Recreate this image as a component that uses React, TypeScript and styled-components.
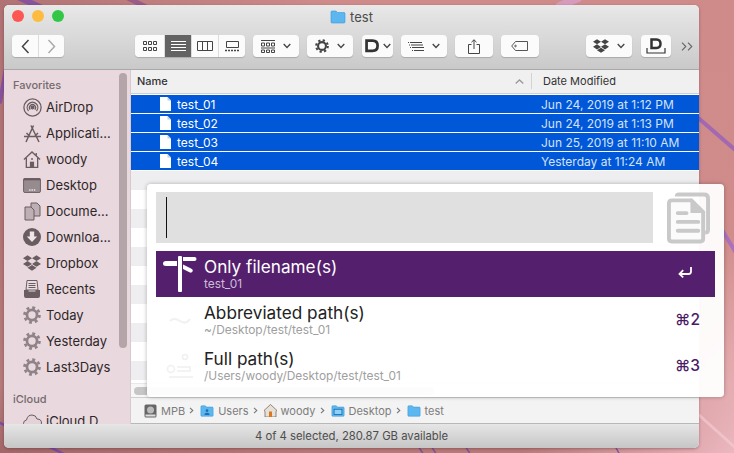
import type { ReactNode } from 'react'
import styled, { createGlobalStyle } from 'styled-components'
import { FaDropbox } from 'react-icons/fa'

const GlobalStyle = createGlobalStyle`
  html, body {
    margin: 0;
    padding: 0;
    width: 734px;
    height: 453px;
    overflow: hidden;
    font-family: 'Inter', 'Liberation Sans', sans-serif;
  }
`

const SELECTED = [
  ['test_01', 'Jun 24, 2019 at 1:12 PM'],
  ['test_02', 'Jun 24, 2019 at 1:13 PM'],
  ['test_03', 'Jun 25, 2019 at 11:10 AM'],
  ['test_04', 'Yesterday at 11:24 AM'],
]

function Gear({ size = 18, color = '#8f8387' }: { size?: number; color?: string }) {
  return (
    <svg width={size} height={size} viewBox="0 0 20 20" fill="none">
      <circle cx="10" cy="10" r="5.6" stroke={color} strokeWidth="3" />
      <circle cx="10" cy="10" r="8.3" stroke={color} strokeWidth="3" strokeDasharray="3.2 3.32" />
    </svg>
  )
}

function Folder({ size = 14, glyph }: { size?: number; glyph?: 'user' | 'desktop' }) {
  return (
    <svg width={size} height={size} viewBox="0 0 16 14">
      <path d="M1 3V2q0-1 1-1h4l1.500 1.500H14q1 0 1 1V12q0 1-1 1H2q-1 0-1-1z" fill="#5cb6ef" stroke="#3a97d8" strokeWidth=".6" />
      {glyph === 'user' && (
        <path d="M8 5a1.600 1.600 0 1 1 0 3.200A1.600 1.600 0 0 1 8 5zM5 11.500q0-2.500 3-2.500t3 2.500z" fill="#1f6fb0" />
      )}
      {glyph === 'desktop' && (
        <rect x="3.500" y="5" width="9" height="6" fill="#8fd0f5" stroke="#1f6fb0" />
      )}
    </svg>
  )
}

const ink = '#6a5d61'

const SIDE_ICONS: Record<string, ReactNode> = {
  AirDrop: (
    <svg width="19" height="19" viewBox="0 0 19 19" fill="none" stroke={ink} strokeWidth="1.300">
      <circle cx="9.500" cy="9.500" r="8.600" />
      <path d="M5.500 13a5.300 5.300 0 1 1 8 0M7.200 11.600a3 3 0 1 1 4.600 0" />
      <circle cx="9.500" cy="9.500" r="1.300" fill={ink} />
    </svg>
  ),
  Apps: (
    <svg width="19" height="19" viewBox="0 0 19 19" fill="none" stroke={ink} strokeWidth="1.500">
      <path d="M3 18 10.500 1.500M8 1.500 16 18M1 12.500h17M3.500 9l3 3M12 12l3-3" />
    </svg>
  ),
  Home: (
    <svg width="18" height="17" viewBox="0 0 19 18" fill="none" stroke={ink} strokeWidth="1.400">
      <path d="M1 9 9.500 1 18 9M3.500 7.500v10h12v-10M14 2v3" />
      <rect x="8" y="12" width="3" height="5.500" fill={ink} />
      <circle cx="9.500" cy="8.500" r="1" fill={ink} stroke="none" />
    </svg>
  ),
  Desktop: (
    <svg width="18" height="15" viewBox="0 0 19 16">
      <rect x=".5" y=".5" width="18" height="15" rx="1.500" fill="#988b8f" stroke={ink} />
      <rect x=".5" y=".5" width="18" height="2" fill={ink} />
      <path d="M6.500 12h1.500v1.500H6.500zM9 12h1.500v1.500H9zM11.500 12H13v1.500h-1.500z" fill="#efe5e8" />
    </svg>
  ),
  Docs: (
    <svg width="17" height="19" viewBox="0 0 17 19" fill="#bdafb3" stroke={ink} strokeWidth="1">
      <path d="M7 1h6l3 3v10H7z" />
      <path d="M1 5h6l3 3v10H1z" />
    </svg>
  ),
  Downloads: (
    <svg width="18" height="18" viewBox="0 0 18 18">
      <circle cx="9" cy="9" r="9" fill={ink} />
      <path d="M6.800 3.500h4.400v5h3L9 14 3.800 8.500h3z" fill="#efe5e8" />
    </svg>
  ),
  Dropbox: <FaDropbox size={18} color={ink} />,
  Recents: (
    <svg width="16" height="18" viewBox="0 0 16 18">
      <path d="M3 .5h10L14 10H2z" fill="#e9dde0" stroke={ink} />
      <path d="M4.500 3.500h7M4.500 5.500h7M4.500 7.500h7" stroke={ink} />
      <path d="M0 10h4.500v1.500h7V10H16v6q0 2-2 2H2q-2 0-2-2z" fill={ink} />
    </svg>
  ),
  Gear: <Gear />,
  Cloud: (
    <svg width="19" height="14" viewBox="0 0 19 14" fill="#e3d3d8" stroke={ink}>
      <path d="M4.500 13q-4 0-4-3.500 0-3 3-3.500 1-5 5.500-5 4 0 5 4 4.500 0 4.500 4 0 4-4 4z" />
    </svg>
  ),
}

const FAVORITES = [
  ['AirDrop', 'AirDrop'],
  ['Apps', 'Applicati...'],
  ['Home', 'woody'],
  ['Desktop', 'Desktop'],
  ['Docs', 'Docume...'],
  ['Downloads', 'Downloa...'],
  ['Dropbox', 'Dropbox'],
  ['Recents', 'Recents'],
  ['Gear', 'Today'],
  ['Gear', 'Yesterday'],
  ['Gear', 'Last3Days'],
]

const DLogo = ({ size = 16 }: { size?: number }) => (
  <svg width={size} height={size * 0.8} viewBox="0 0 20 16" fill="none" stroke="#333" strokeWidth="3.200">
    <path d="M3 2v12h7q6 0 6-6t-6-6z" />
  </svg>
)

const Chevron = () => (
  <svg width="8" height="6" viewBox="0 0 8 6" fill="none" stroke="#444" strokeWidth="1.300">
    <path d="M.7 1 4 4.500 7.300 1" />
  </svg>
)

const Crumb = () => (
  <CrumbMark>
    <svg width="5" height="7" viewBox="0 0 5 7" fill="none" stroke="#777" strokeWidth="1.100">
      <path d="M1 .8 3.800 3.500 1 6.200" />
    </svg>
  </CrumbMark>
)

const grid6 = (
  <svg width="14" height="10" viewBox="0 0 14 10" fill="none" stroke="#444">
    <path d="M.5.500h3v3h-3zM5.500.500h3v3h-3zM10.500.500h3v3h-3zM.5 6.500h3v3h-3zM5.500 6.500h3v3h-3zM10.500 6.500h3v3h-3z" />
  </svg>
)

export default function App() {
  return (
    <Desktop>
      <GlobalStyle />
      <Wallpaper width="734" height="453" viewBox="0 0 734 453" fill="none" strokeLinecap="round">
        <path d="M20-2 40 7" stroke="#7d4aa8" strokeWidth="6" opacity=".8" />
        <path d="M128-2l18 9" stroke="#8a4d8c" strokeWidth="5" opacity=".7" />
        <path d="M560 6l18-8" stroke="#d9a3d2" strokeWidth="8" opacity=".7" />
        <path d="M0 102 6 68" stroke="#7d4aa8" strokeWidth="4" opacity=".8" />
        <path d="M696 116l44 38" stroke="#9a62b8" strokeWidth="4" opacity=".85" />
        <path d="M722 230l16 26" stroke="#a56cc6" strokeWidth="4" opacity=".85" />
        <path d="M-2 422l66 32" stroke="#6f45b5" strokeWidth="2.500" opacity=".85" />
        <path d="M418 446l6 9M431 446l6 9M465 446l6 9M615 446l5 9" stroke="#6a4aa8" strokeWidth="1.500" opacity=".8" />
        <path d="M699 415l40 36" stroke="#f3c9d0" strokeWidth="3" opacity=".7" />
      </Wallpaper>
      <Window>
        <Toolbar>
          <TitleRow>
            <Lights>
              <Light $color="#fc5753" />
              <Light $color="#fdbc40" />
              <Light $color="#33c748" />
            </Lights>
            <Title>
              <Folder size={16} />
              test
            </Title>
          </TitleRow>
          <Tools>
            <Segment>
              <SegButton $w={26}>
                <svg width="9" height="15" viewBox="0 0 9 15" fill="none" stroke="#444" strokeWidth="1.500">
                  <path d="M7.500 1 1.500 7.500 7.500 14" />
                </svg>
              </SegButton>
              <SegButton $w={25}>
                <svg width="9" height="15" viewBox="0 0 9 15" fill="none" stroke="#aaa" strokeWidth="1.500">
                  <path d="M1.500 1 7.500 7.500 1.500 14" />
                </svg>
              </SegButton>
            </Segment>
            <Segment $ml={71}>
              <SegButton $w={29}>{grid6}</SegButton>
              <SegButton $w={26} $active>
                <svg width="15" height="10" viewBox="0 0 15 10" stroke="#fff">
                  <path d="M0 .5h15M0 3.500h15M0 6.500h15M0 9.500h15" />
                </svg>
              </SegButton>
              <SegButton $w={26}>
                <svg width="16" height="10" viewBox="0 0 16 10" fill="none" stroke="#444">
                  <path d="M.5.500h15v9H.5zM5.500.500v9M10.500.500v9" />
                </svg>
              </SegButton>
              <SegButton $w={26}>
                <svg width="15" height="11" viewBox="0 0 15 11" fill="none" stroke="#444">
                  <path d="M1.500.500h12v6h-12z" />
                  <path d="M0 9.500h15" strokeDasharray="2 1" strokeWidth="1.500" />
                </svg>
              </SegButton>
            </Segment>
            <ToolButton $w={46} $ml={8}>
              <svg width="14" height="13" viewBox="0 0 14 13" fill="none" stroke="#444">
                <path d="M0 .5h14M.5 3h3v3h-3zM5.500 3h3v3h-3zM10.500 3h3v3h-3zM0 8h14M.5 10h3v2.500h-3zM5.500 10h3v2.500h-3zM10.500 10h3v2.500h-3z" />
              </svg>
              <Chevron />
            </ToolButton>
            <ToolButton $w={46} $ml={8}>
              <Gear size={14} color="#444" />
              <Chevron />
            </ToolButton>
            <ToolButton $w={31} $ml={9}>
              <DLogo size={17} />
              <Chevron />
            </ToolButton>
            <ToolButton $w={46} $ml={8}>
              <svg width="16" height="9" viewBox="0 0 16 9" stroke="#444">
                <path d="M0 .5h1M2 .5h12M1 3h1M3 3h12M2 5.500h1M4 5.500h12M4 8.500h1M6 8.500h10" />
              </svg>
              <Chevron />
            </ToolButton>
            <ToolButton $w={38} $ml={8}>
              <svg width="12" height="15" viewBox="0 0 12 15" fill="none" stroke="#444">
                <path d="M6 10V.8M3.500 3.200 6 .8l2.500 2.400M3.500 5.500H.5v9h11v-9h-3" />
              </svg>
            </ToolButton>
            <ToolButton $w={38} $ml={8}>
              <svg width="18" height="10" viewBox="0 0 18 10" fill="none" stroke="#555">
                <path d="M.7 5 4.500.5h12v9h-12z" />
                <circle cx="4.500" cy="5" r=".8" />
              </svg>
            </ToolButton>
            <ToolButton $w={46} $ml={47}>
              <FaDropbox size={16} color="#444" />
              <Chevron />
            </ToolButton>
            <ToolButton $w={30} $ml={9}>
              <svg width="20" height="16" viewBox="0 0 20 16" fill="none" stroke="#333">
                <path d="M5.500 1.500V10h5q4 0 4-4.200t-4-4.300z" strokeWidth="2.500" />
                <path d="M1 10v5h18v-5" strokeWidth="1.200" />
              </svg>
            </ToolButton>
            <More>
              <svg width="12" height="9" viewBox="0 0 12 9" fill="none" stroke="#666" strokeWidth="1.100">
                <path d="M1 .7 4.800 4.500 1 8.300M7 .7l3.800 3.800L7 8.300" />
              </svg>
            </More>
          </Tools>
        </Toolbar>
        <Body>
          <Sidebar>
            <SideHeading>Favorites</SideHeading>
            {FAVORITES.map(([icon, label]) => (
              <SideItem key={label}>
                <SideIcon>{SIDE_ICONS[icon]}</SideIcon>
                {label}
              </SideItem>
            ))}
            <SideHeading $mt={13}>iCloud</SideHeading>
            <SideItem>
              <SideIcon>{SIDE_ICONS.Cloud}</SideIcon>
              iCloud D
            </SideItem>
            <SideScroll />
          </Sidebar>
          <Main>
            <ListHeader>
              <NameColumn>
                Name
                <svg width="9" height="5" viewBox="0 0 9 5" fill="none" stroke="#999" strokeWidth="1.300">
                  <path d="M.7 4.500 4.500 1l3.800 3.500" />
                </svg>
              </NameColumn>
              <DateColumn>Date Modified</DateColumn>
            </ListHeader>
            <Rows>
              {SELECTED.map(([name, date]) => (
                <FileRow key={name}>
                  <FileName>
                    <svg width="11" height="14" viewBox="0 0 11 14">
                      <path d="M0 0h7.500L11 3.500V14H0z" fill="#fff" />
                      <path d="M7.500 0 11 3.500H7.500z" fill="#c5cfe0" />
                    </svg>
                    {name}
                  </FileName>
                  <FileDate>{date}</FileDate>
                </FileRow>
              ))}
              {Array.from({ length: 12 }, (_, i) => (
                <Stripe key={i} $odd={i % 2 === 0} />
              ))}
            </Rows>
            <HScroll>
              <HThumb />
            </HScroll>
            <PathBar>
              <svg width="13" height="14" viewBox="0 0 13 14">
                <rect x=".5" y=".5" width="12" height="13" rx="1.500" fill="#666" />
                <circle cx="6.500" cy="6" r="3.500" fill="#bbb" />
                <rect x="1.500" y="10.500" width="10" height="2" fill="#ddd" />
              </svg>
              <PathLabel>MPB</PathLabel>
              <Crumb />
              <Folder glyph="user" />
              <PathLabel>Users</PathLabel>
              <Crumb />
              <svg width="13" height="13" viewBox="0 0 13 13">
                <path d="M0 6.500 6.500.5l6.500 6-1 .8V13H1V7.300z" fill="#e5e0d8" stroke="#6b5b4d" strokeWidth=".7" />
                <rect x="5" y="7.500" width="3" height="5.500" fill="#e0761c" />
              </svg>
              <PathLabel>woody</PathLabel>
              <Crumb />
              <Folder glyph="desktop" />
              <PathLabel>Desktop</PathLabel>
              <Crumb />
              <Folder />
              <PathLabel>test</PathLabel>
            </PathBar>
          </Main>
        </Body>
        <StatusBar>4 of 4 selected, 280.87 GB available</StatusBar>
      </Window>
      <Palette>
        <SearchRow>
          <SearchField>
            <Caret />
          </SearchField>
          <svg width="43" height="52" viewBox="0 0 44 52" fill="none" stroke="#c9c9c9" strokeWidth="4">
            <path d="M10 4q0-2 2-2h26q4 0 4 4v32q0 3-3 3" />
            <path d="M2 11q0-3 3-3h20l12 12v27q0 3-3 3H5q-3 0-3-3z" fill="#fbfbfb" />
            <path d="M25 8l12 12H25z" fill="#c9c9c9" strokeWidth="2" />
            <path d="M11 21h9M11 30h21M11 39h21" strokeWidth="4" strokeLinecap="round" />
          </svg>
        </SearchRow>
        <Option $selected>
          <OptionIcon>
            <svg width="34" height="36" viewBox="0 0 34 36" fill="#fff">
              <rect x="15" y="0" width="4" height="36" rx="1" />
              <path d="M20 1h11.500q2 0 2 2t-2 2H20zM14 5H3q-3 0-3 2.500T3 10h11zM20 8.500l8 4q2.500 1.200 1.500 3t-3 .8L20 13z" />
            </svg>
          </OptionIcon>
          <OptionText>
            <OptionTitle>Only filename(s)</OptionTitle>
            <OptionSub $selected>test_01</OptionSub>
          </OptionText>
          <Shortcut $selected>
            <svg width="14" height="11" viewBox="0 0 14 11" fill="none" stroke="#fff" strokeWidth="1.800">
              <path d="M13 0v4.500Q13 7 10.500 7H2M5.200 3.200 1.500 7l3.700 3.300" />
            </svg>
          </Shortcut>
        </Option>
        <Option>
          <OptionIcon>
            <svg width="22" height="8" viewBox="0 0 22 8" fill="none" stroke="#f1f1f1" strokeWidth="2">
              <path d="M1 5q4-4 10 0t10-2" />
            </svg>
          </OptionIcon>
          <OptionText>
            <OptionTitle>Abbreviated path(s)</OptionTitle>
            <OptionSub>~/Desktop/test/test_01</OptionSub>
          </OptionText>
          <Shortcut>⌘2</Shortcut>
        </Option>
        <Option>
          <OptionIcon>
            <svg width="28" height="26" viewBox="0 0 28 26" fill="none" stroke="#f0f0f0" strokeWidth="1.500">
              <circle cx="19" cy="4" r="2.500" />
              <circle cx="5" cy="16" r="3.500" />
              <path d="M11 14h13v4H11M3 24h24" />
            </svg>
          </OptionIcon>
          <OptionText>
            <OptionTitle>Full path(s)</OptionTitle>
            <OptionSub>/Users/woody/Desktop/test/test_01</OptionSub>
          </OptionText>
          <Shortcut>⌘3</Shortcut>
        </Option>
      </Palette>
    </Desktop>
  )
}

const Desktop = styled.div`
  position: relative;
  box-sizing: border-box;
  width: 734px;
  height: 453px;
  overflow: hidden;
  padding: 5px 35px 5px 4px;
  background:
    linear-gradient(135deg, transparent 82%, #ecb8c0 100%),
    linear-gradient(90deg, rgba(120, 70, 75, 0.35) 0%, transparent 45%),
    linear-gradient(180deg, #cf8a8a 0%, #d08c8b 50%, #d79795 85%, #b87a78 100%);
`

const Wallpaper = styled.svg`
  position: absolute;
  top: 0;
  left: 0;
`

const Window = styled.div`
  position: relative;
  display: flex;
  flex-direction: column;
  height: 100%;
  border-radius: 5px;
  overflow: hidden;
  background: #fff;
  box-shadow: 0 1px 3px rgba(60, 20, 30, 0.35);
`

const Toolbar = styled.div`
  flex: none;
  box-sizing: border-box;
  height: 65px;
  border-bottom: 1px solid #a9a9a9;
  background: linear-gradient(180deg, #e8e8e8 0%, #d9d9d9 50%, #c9c9c9 100%);
`

const TitleRow = styled.div`
  position: relative;
  display: flex;
  align-items: center;
  justify-content: center;
  height: 30px;
`

const Lights = styled.div`
  position: absolute;
  left: 8px;
  top: 5px;
  display: flex;
  gap: 8px;
`

const Light = styled.span<{ $color: string }>`
  width: 12px;
  height: 12px;
  border-radius: 50%;
  background: ${(p) => p.$color};
`

const Title = styled.div`
  display: flex;
  align-items: center;
  gap: 4px;
  margin-top: -6px;
  font-size: 13px;
  color: #4c4c4c;
`

const Tools = styled.div`
  display: flex;
  align-items: flex-start;
  padding-left: 8px;
`

const Segment = styled.div<{ $ml?: number }>`
  display: flex;
  margin-left: ${(p) => p.$ml ?? 0}px;
  height: 22px;
  border-radius: 4px;
  overflow: hidden;
  gap: 1px;
  background: #dcdcdc;
  box-shadow: 0 1px 1px rgba(0, 0, 0, 0.18);
`

const SegButton = styled.div<{ $w: number; $active?: boolean }>`
  display: flex;
  align-items: center;
  justify-content: center;
  width: ${(p) => p.$w}px;
  background: ${(p) => (p.$active ? '#636363' : '#fbfbfb')};
`

const ToolButton = styled.div<{ $w: number; $ml: number }>`
  display: flex;
  align-items: center;
  justify-content: space-evenly;
  box-sizing: border-box;
  width: ${(p) => p.$w}px;
  height: 22px;
  margin-left: ${(p) => p.$ml}px;
  border-radius: 4px;
  background: #fbfbfb;
  box-shadow: 0 1px 1px rgba(0, 0, 0, 0.18);
`

const More = styled.div`
  display: flex;
  align-items: center;
  height: 22px;
  margin-left: 10px;
`

const Body = styled.div`
  display: flex;
  flex: none;
  height: 354px;
`

const Sidebar = styled.div`
  position: relative;
  flex: none;
  width: 127px;
  height: 354px;
  overflow: hidden;
  box-sizing: border-box;
  padding-top: 9px;
  background: #e9d8dd;
  border-right: 1px solid #d9c9cd;
`

const SideHeading = styled.div<{ $mt?: number }>`
  height: 13px;
  margin: ${(p) => p.$mt ?? 0}px 0 2px 9px;
  font-size: 11px;
  line-height: 13px;
  font-weight: 500;
  color: #75696d;
`

const SideItem = styled.div`
  display: flex;
  align-items: center;
  height: 26px;
  font-size: 13px;
  color: #2e2729;
  white-space: nowrap;
`

const SideIcon = styled.span`
  display: flex;
  align-items: center;
  justify-content: center;
  width: 20px;
  margin: 0 4px 0 18px;
`

const SideScroll = styled.div`
  position: absolute;
  top: 3px;
  left: 115px;
  width: 8px;
  height: 275px;
  border-radius: 4px;
  background: #b3a5a8;
`

const Main = styled.div`
  display: flex;
  flex: 1;
  flex-direction: column;
  min-width: 0;
`

const ListHeader = styled.div`
  display: flex;
  flex: none;
  box-sizing: border-box;
  height: 24px;
  padding-bottom: 1px;
  border-bottom: 1px solid #cfcfcf;
  background: #f0f0f0;
  font-size: 11px;
  font-weight: 500;
  color: #333;
`

const NameColumn = styled.div`
  display: flex;
  align-items: center;
  justify-content: space-between;
  box-sizing: border-box;
  width: 401px;
  padding: 0 7px 0 6px;
  margin: 3px 0;
  border-right: 1px solid #d3d3d3;
`

const DateColumn = styled.div`
  display: flex;
  align-items: center;
  padding-left: 11px;
  font-weight: 400;
`

const Rows = styled.div`
  flex: 1;
  min-height: 0;
  overflow: hidden;
  padding-top: 1px;
`

const FileRow = styled.div`
  display: flex;
  align-items: center;
  height: 18px;
  margin-bottom: 1px;
  background: #0057d8;
  color: #fff;
  font-size: 12px;
`

const FileName = styled.div`
  display: flex;
  align-items: center;
  gap: 6px;
  width: 410px;
  padding-left: 29px;
  box-sizing: border-box;
`

const FileDate = styled.div`
  color: #d4e2f7;
`

const Stripe = styled.div<{ $odd: boolean }>`
  height: 19px;
  background: ${(p) => (p.$odd ? '#eeeef0' : '#fff')};
`

const HScroll = styled.div`
  flex: none;
  display: flex;
  align-items: center;
  box-sizing: border-box;
  height: 14px;
  padding-left: 3px;
  background: #f7f7f7;
  border-top: 1px solid #e8e8e8;
`

const HThumb = styled.div`
  width: 300px;
  height: 8px;
  border-radius: 4px;
  background: #c6c6c6;
`

const PathBar = styled.div`
  flex: none;
  display: flex;
  align-items: center;
  gap: 4px;
  box-sizing: border-box;
  height: 27px;
  padding-left: 13px;
  border-top: 1px solid #cfcfcf;
  border-bottom: 1px solid #b8b8b8;
  background: #f3f3f3;
`

const PathLabel = styled.span`
  font-size: 11px;
  color: #7d7d7d;
`

const CrumbMark = styled.span`
  display: flex;
  margin-right: 2px;
`

const StatusBar = styled.div`
  flex: 1;
  display: flex;
  align-items: center;
  justify-content: center;
  font-size: 11.3px;
  color: #4d4d4d;
  background: linear-gradient(180deg, #e6e6e6 0%, #c6c6c6 100%);
`

const Palette = styled.div`
  position: absolute;
  top: 184px;
  left: 147px;
  box-sizing: border-box;
  width: 577px;
  height: 213px;
  padding: 8px 9px;
  border-radius: 4px;
  background: rgba(255, 255, 255, 0.95);
  box-shadow: 0 0 4px rgba(0, 0, 0, 0.28);
`

const SearchRow = styled.div`
  display: flex;
  align-items: center;
  justify-content: space-between;
  height: 51px;
  margin-bottom: 8px;
  padding-right: 5px;
`

const SearchField = styled.div`
  width: 497px;
  height: 51px;
  display: flex;
  align-items: center;
  padding-left: 10px;
  box-sizing: border-box;
  background: #e0e0e0;
`

const Caret = styled.span`
  width: 1px;
  height: 41px;
  background: #111;
`

const Option = styled.div<{ $selected?: boolean }>`
  display: flex;
  align-items: center;
  height: 46px;
  padding-bottom: 2px;
  box-sizing: border-box;
  color: ${(p) => (p.$selected ? '#fff' : '#222')};
  background: ${(p) => (p.$selected ? '#541f6d' : 'transparent')};
`

const OptionIcon = styled.div`
  display: flex;
  align-items: center;
  justify-content: center;
  flex: none;
  width: 48px;
  margin-bottom: -2px;
`

const OptionText = styled.div`
  flex: 1;
  min-width: 0;
`

const OptionTitle = styled.div`
  font-size: 17.2px;
  line-height: 20px;
`

const OptionSub = styled.div<{ $selected?: boolean }>`
  font-size: 11.9px;
  line-height: 13px;
  color: ${(p) => (p.$selected ? '#cdbdd6' : '#a0a0a0')};
`

const Shortcut = styled.div<{ $selected?: boolean }>`
  display: flex;
  align-items: center;
  justify-content: flex-end;
  width: 60px;
  padding-right: ${(p) => (p.$selected ? 23 : 15)}px;
  margin-bottom: ${(p) => (p.$selected ? 2 : 0)}px;
  box-sizing: border-box;
  font-size: 15.5px;
  font-weight: 500;
  color: #4a1a66;
`
